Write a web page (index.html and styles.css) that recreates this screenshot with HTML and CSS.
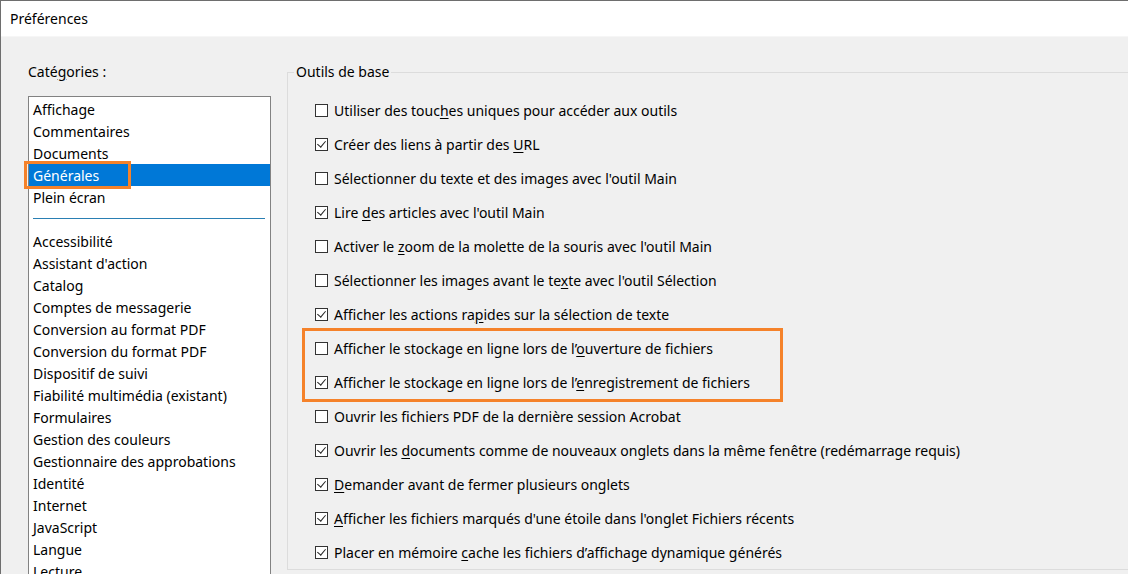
FILE: index.html
```html
<!DOCTYPE html>
<html lang="fr">

<head>
    <meta charset="UTF-8">
    <meta name="viewport" content="width=device-width, initial-scale=1.0">
    <title>Préférences</title>
    <link rel="stylesheet" href="styles.css">
</head>

<body>
    <div class="dialog">
        <div class="title-bar">Préférences</div>

        <div class="dialog-body">
            <!-- Left column: category list -->
            <div class="categories">
                <div class="categories-label">Caté<u>g</u>ories :</div>
                <ul class="category-list">
                    <li>Affichage</li>
                    <li>Commentaires</li>
                    <li>Documents</li>
                    <li class="selected"><span class="callout"></span>Générales</li>
                    <li>Plein écran</li>
                    <li class="separator"></li>
                    <li>Accessibilité</li>
                    <li>Assistant d'action</li>
                    <li>Catalog</li>
                    <li>Comptes de messagerie</li>
                    <li>Conversion au format PDF</li>
                    <li>Conversion du format PDF</li>
                    <li>Dispositif de suivi</li>
                    <li>Fiabilité multimédia (existant)</li>
                    <li>Formulaires</li>
                    <li>Gestion des couleurs</li>
                    <li>Gestionnaire des approbations</li>
                    <li>Identité</li>
                    <li>Internet</li>
                    <li>JavaScript</li>
                    <li>Langue</li>
                    <li>Lecture</li>
                </ul>
            </div>

            <!-- Right column: settings group -->
            <fieldset class="group">
                <legend>Outils de base</legend>

                <label class="option"><span class="box"></span><span>Utiliser des touc<u>h</u>es uniques pour accéder aux outils</span></label>
                <label class="option"><span class="box checked"></span><span>Créer des liens à partir des <u>U</u>RL</span></label>
                <label class="option"><span class="box"></span><span>Sélectionner du texte et des images avec l'outil Main</span></label>
                <label class="option"><span class="box checked"></span><span>Lire <u>d</u>es articles avec l'outil Main</span></label>
                <label class="option"><span class="box"></span><span>Activer le <u>z</u>oom de la molette de la souris avec l'outil Main</span></label>
                <label class="option"><span class="box"></span><span>Sélectionner les images avant le te<u>x</u>te avec l'outil Sélection</span></label>
                <label class="option"><span class="box checked"></span><span>Afficher les actions ra<u>p</u>ides sur la sélection de texte</span></label>

                <div class="highlight">
                    <label class="option"><span class="box"></span><span>Afficher le stockage en ligne lors de l’<u>o</u>uverture de fichiers</span></label>
                    <label class="option"><span class="box checked"></span><span>Afficher le stockage en ligne lors de l’<u>e</u>nregistrement de fichiers</span></label>
                </div>

                <label class="option"><span class="box"></span><span>Ouvrir les fichiers PDF de la dernière session Acrobat</span></label>
                <label class="option"><span class="box checked"></span><span>Ouvrir les <u>d</u>ocuments comme de nouveaux onglets dans la même fenêtre (redémarrage requis)</span></label>
                <label class="option"><span class="box checked"></span><span><u>D</u>emander avant de fermer plusieurs onglets</span></label>
                <label class="option"><span class="box checked"></span><span><u>A</u>fficher les fichiers marqués d'une étoile dans l'onglet Fichiers récents</span></label>
                <label class="option"><span class="box checked"></span><span>Placer en mémoire <u>c</u>ache les fichiers d’affichage dynamique générés</span></label>
            </fieldset>
        </div>
    </div>
</body>

</html>
```

FILE: styles.css
```css
/* Base page: Windows dialog look */
body {
    margin: 0;
    padding: 0;
    background: #f0f0f0;
    font-family: "Noto Sans", "Open Sans", sans-serif;
    font-size: 14px;
    color: #000;
    overflow: hidden;
}

u {
    text-underline-offset: 2px;
}

.dialog {
    height: 574px;
    box-sizing: border-box;
    border-top: 1px solid #6e6e6e;
    border-left: 1px solid #6e6e6e;
    overflow: hidden;
}

/* Title bar */
.title-bar {
    height: 36px;
    line-height: 36px;
    padding-left: 9px;
    background: #fff;
    border-bottom: 1px solid #f6f6f6;
    box-sizing: border-box;
}

.dialog-body {
    display: flex;
    align-items: flex-start;
    padding-top: 25px;
}

/* Category list */
.categories {
    width: 243px;
    margin-left: 27px;
    flex-shrink: 0;
}

.categories-label {
    height: 20px;
    line-height: 20px;
    margin-bottom: 14px;
}

.category-list {
    list-style: none;
    margin: 0;
    padding: 1px 0 0;
    height: 600px;
    background: #fff;
    border: 1px solid #828282;
}

.category-list li {
    position: relative;
    height: 22px;
    line-height: 23px;
    padding-left: 4px;
    white-space: nowrap;
}

.category-list li.selected {
    background: #0078d7;
    color: #fff;
}

.category-list li.separator {
    height: 1px;
    margin: 10px 5px 11px 4px;
    padding: 0;
    background: #2a7fb3;
}

/* Orange annotation around the selected category */
.callout {
    position: absolute;
    left: -5px;
    top: -3px;
    width: 107px;
    height: 28px;
    box-sizing: border-box;
    border: 3px solid #f5822a;
}

/* Settings group box */
.group {
    flex: 1;
    margin: 0 0 0 16px;
    padding: 11px 0 0 0;
    border: 1px solid #dcdcdc;
    border-right: none;
    min-width: 0;
}

.group legend {
    margin-left: 6px;
    padding: 0 2px;
    height: 20px;
    line-height: 20px;
}

.option {
    display: flex;
    align-items: center;
    height: 34px;
    padding-left: 27px;
    white-space: nowrap;
}

.box {
    width: 13px;
    height: 13px;
    box-sizing: border-box;
    border: 1px solid #333;
    background: #fff;
    margin-right: 6px;
    flex-shrink: 0;
    position: relative;
}

/* Check mark drawn with borders */
.box.checked::after {
    content: '';
    position: absolute;
    left: 3px;
    top: 0px;
    width: 4px;
    height: 7px;
    border-right: 1px solid #222;
    border-bottom: 1px solid #222;
    transform: rotate(40deg);
}

/* Orange annotation around the two storage options */
.highlight {
    width: 481px;
    box-sizing: border-box;
    margin: -3px 0 -3px 14px;
    border: 3px solid #f5822a;
}

.highlight .option {
    padding-left: 10px;
}
```
